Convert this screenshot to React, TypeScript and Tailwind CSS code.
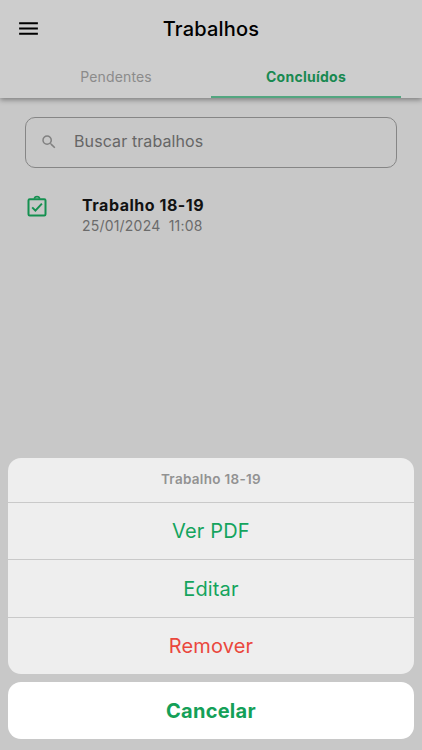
import { MdMenu, MdSearch } from "react-icons/md";

const actions = [
  { label: "Ver PDF", style: "text-[#14a45d] tracking-[0.15px]" },
  { label: "Editar", style: "text-[#14a45d] tracking-[0.15px]" },
  { label: "Remover", style: "text-[#ea473d] tracking-[0.15px]" },
];

function ClipboardCheck() {
  return (
    <svg viewBox="0 0 24 24" className="mt-[0.5px] size-6 shrink-0" fill="none" stroke="#159050" strokeWidth="2">
      <rect x="3.5" y="4.2" width="17" height="16.2" rx="1.2" />
      <path d="M9.2 3.6C9.7 2.4 10.7 1.7 12 1.7s2.3.7 2.8 1.9" strokeWidth="1.7" />
      <path d="M7.2 12.4l3.2 3.2 6.5-7" />
    </svg>
  );
}

function Header() {
  return (
    <header className="relative h-[98px] bg-[#cdcdcd] shadow-[0_2px_5px_rgba(0,0,0,0.36)]">
      <div className="flex h-[57px] items-center px-[17px]">
        <button className="-ml-px flex w-[25px] justify-center" aria-label="Menu">
          <MdMenu className="size-[25px] shrink-0 text-black" />
        </button>
        <h1 className="flex-1 pr-6 text-center text-[20px] font-medium tracking-[0.2px] text-black">Trabalhos</h1>
      </div>
      <nav className="mx-[21px] grid h-[41px] grid-cols-2 text-[14px]">
        <button className="flex items-center justify-center pb-[3px] tracking-[0.15px] text-[#8b8b8b]">Pendentes</button>
        <button className="flex items-center justify-center border-b-2 border-[#53a680] pb-px font-bold tracking-[0.25px] text-[#198951]">
          Concluídos
        </button>
      </nav>
    </header>
  );
}

function ActionSheet() {
  return (
    <section className="flex flex-col gap-2 pr-[8.5px] pb-[11px] pl-[8.4px] text-center">
      <div className="overflow-hidden rounded-[13px] bg-[#eeeeee]">
        <p className="flex h-[44.5px] items-center justify-center pb-px text-[13.5px] font-semibold tracking-[0.3px] text-[#929292]">
          Trabalho 18-19
        </p>
        {actions.map((action) => (
          <button
            key={action.label}
            className={`flex h-[57.3px] w-full items-center justify-center border-t border-[#c9c9c9] text-[20px] ${action.style}`}
          >
            {action.label}
          </button>
        ))}
      </div>
      <button className="flex h-[57px] items-center justify-center rounded-[13px] bg-white text-[20px] font-bold tracking-[0.25px] text-[#14a058]">
        Cancelar
      </button>
    </section>
  );
}

export default function App() {
  return (
    <div className="flex h-[750px] w-[422px] flex-col overflow-hidden bg-[#c8c8c8] font-['Inter',sans-serif]">
      <Header />
      <main className="flex-1 px-[25px] pt-[18.5px]">
        <div className="flex h-[51.5px] items-center rounded-[10px] border border-[#868686] pl-[14px]">
          <MdSearch className="size-[18px] text-[#818181]" />
          <span className="ml-4 pb-[3px] text-[16px] tracking-[0.1px] text-[#666666]">Buscar trabalhos</span>
        </div>
        <div className="mt-[26px] flex">
          <ClipboardCheck />
          <div className="ml-[33px]">
            <p className="text-[16px] leading-[22px] font-bold tracking-[0.52px] text-[#121212]">Trabalho 18-19</p>
            <p className="text-[14px] leading-5 tracking-[0.2px] whitespace-pre text-[#6b6b6b]">25/01/2024  11:08</p>
          </div>
        </div>
      </main>
      <ActionSheet />
    </div>
  );
}
